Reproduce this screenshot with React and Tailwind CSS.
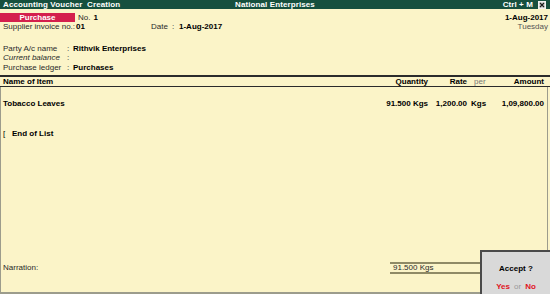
import React from 'react';

function CloseBox() {
  return (
    <svg width="8" height="8" viewBox="0 0 8 8" className="block">
      <rect x="0.5" y="0.5" width="7" height="7" fill="#d8d8d8" stroke="#f0f0f0" />
      <path d="M2 2 L6 6 M6 2 L2 6" stroke="#1b1b1b" strokeWidth="1.2" />
    </svg>
  );
}

export default function App() {
  return (
    <div className="relative w-[550px] h-[294px] overflow-hidden bg-[#fbf4c8] flex flex-col font-['Liberation_Sans',Arial,sans-serif] text-[8px] leading-none text-[#2a2a2a]">
      {/* title bar */}
      <div className="h-[9px] bg-[#16503e] text-white font-bold grid grid-cols-3 items-center px-[3px] tracking-[0.1px]">
        <span>Accounting Voucher&nbsp; Creation</span>
        <span className="text-center">National Enterprises</span>
        <span className="flex items-center justify-end gap-[5px] pr-[1px]">
          Ctrl + M
          <CloseBox />
        </span>
      </div>

      {/* voucher header */}
      <div className="mt-[4px] flex justify-between pr-[2px]">
        <div className="flex flex-col">
          <div className="h-[9px] flex items-center">
            <div className="w-[75px] h-[9px] bg-[#d41f4d] text-white font-bold flex items-center justify-center">Purchase</div>
            <span className="ml-[3px]">No.</span>
            <span className="ml-[3px] font-bold text-black">1</span>
          </div>
          <div className="h-[10px] flex items-center pl-[3px]">
            <span className="w-[73px]">Supplier invoice no.:</span>
            <span className="w-[75px] font-bold text-black">01</span>
            <span className="w-[21px]">Date</span>
            <span className="w-[7px]">:</span>
            <span className="font-bold text-black">1-Aug-2017</span>
          </div>
        </div>
        <div className="flex flex-col items-end">
          <div className="h-[9px] flex items-center font-bold text-black">1-Aug-2017</div>
          <div className="h-[10px] flex items-center text-[#555]">Tuesday</div>
        </div>
      </div>

      {/* party details */}
      <div className="mt-[12px] flex flex-col pl-[3px]">
        <div className="h-[9px] flex items-center">
          <span className="w-[64px]">Party A/c name</span>
          <span className="w-[6px]">:</span>
          <span className="font-bold text-black">Rithvik Enterprises</span>
        </div>
        <div className="h-[10px] flex items-center italic">
          <span className="w-[64px]">Current balance</span>
          <span className="w-[6px] not-italic">:</span>
        </div>
        <div className="h-[9px] flex items-center">
          <span className="w-[64px]">Purchase ledger</span>
          <span className="w-[6px]">:</span>
          <span className="font-bold text-black">Purchases</span>
        </div>
      </div>

      {/* table header */}
      <div className="mt-[3px] border-t-2 border-b border-[#2b2b2b] h-[12px] flex items-center pl-[3px] font-bold text-black">
        <span className="flex-1">Name of Item</span>
        <span className="w-[60px] text-right">Quantity</span>
        <span className="w-[39px] text-right">Rate</span>
        <span className="w-[23px] pl-[7px] font-normal text-[#777]">per</span>
        <span className="w-[54px] text-right">Amount</span>
        <span className="w-[6px]" />
      </div>

      {/* body */}
      <div className="flex-1 mr-[2px] border-l border-r border-b-2 border-[#9c9c8c] flex flex-col pl-[2px]">
        <div className="mt-[12px] h-[9px] flex items-center font-bold text-black">
          <span className="flex-1">Tobacco Leaves</span>
          <span className="w-[60px] text-right">91.500 Kgs</span>
          <span className="w-[39px] text-right">1,200.00</span>
          <span className="w-[23px] pl-[4px]">Kgs</span>
          <span className="w-[54px] text-right">1,09,800.00</span>
          <span className="w-[3px]" />
        </div>
        <div className="mt-[21px] h-[9px] flex items-center font-bold text-black">
          <span className="w-[9px] font-normal">[</span>
          <span>End of List</span>
        </div>
        <div className="flex-1" />
        <div className="mb-[18px] flex items-center">
          <span className="flex-1">Narration:</span>
          <div className="w-[90px] h-[12px] border-t-2 border-b-2 border-[#8f8a66] flex items-center pl-[3px] mr-[67px]">91.500 Kgs</div>
        </div>
      </div>

      {/* accept popup */}
      <div className="absolute right-0 bottom-0 w-[70px] h-[44px] bg-[#d9d9d9] border-2 border-[#4a4a4a] border-r-0 border-b-0 flex flex-col items-center">
        <div className="mt-[13px] font-bold text-black">Accept ?</div>
        <div className="mt-auto mb-[3px] flex items-center gap-[4px]">
          <span className="font-bold text-[#e0141e]">Yes</span>
          <span className="text-[#9a9a9a]">or</span>
          <span className="font-bold text-[#e0141e]">No</span>
        </div>
      </div>
    </div>
  );
}
